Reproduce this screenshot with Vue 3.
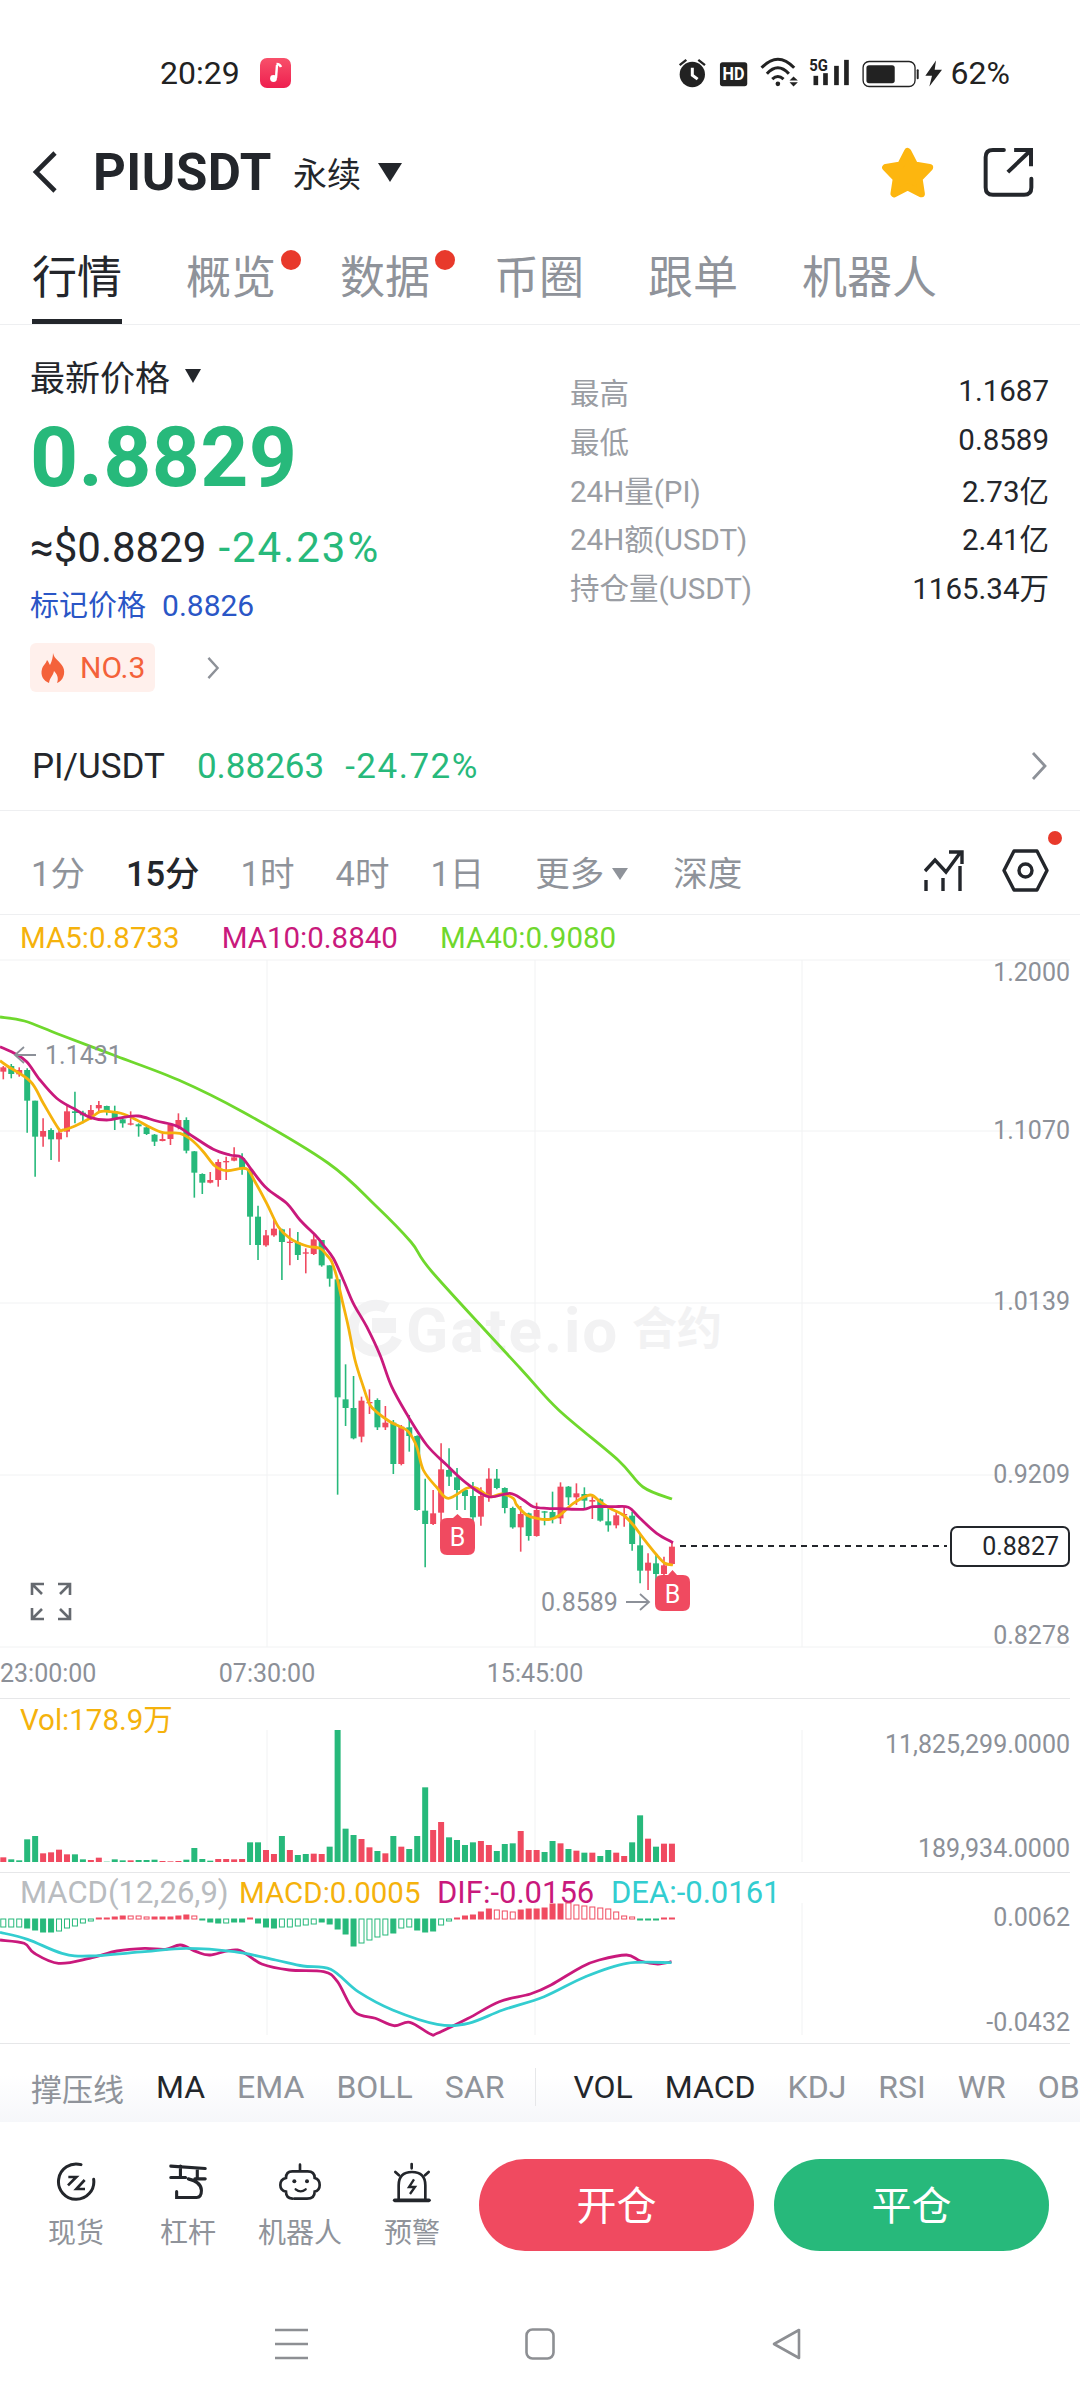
<template>
  <div class="page">
    <!-- status bar -->
    <div class="status">
      <span class="clock">20:29</span>
      <svg class="music" viewBox="0 0 31 30">
        <defs>
          <linearGradient id="mus" x1="0" y1="0" x2="0" y2="1">
            <stop offset="0" stop-color="#f8506a" />
            <stop offset="1" stop-color="#ee1f4f" />
          </linearGradient>
        </defs>
        <rect width="31" height="30" rx="7" fill="url(#mus)" />
        <path d="M17 7 L16 20" stroke="#fff" stroke-width="2.4" fill="none" />
        <path d="M16.5 6 Q20 6 21 9" stroke="#fff" stroke-width="2.4" fill="none" />
        <circle cx="13.5" cy="20.5" r="3.4" fill="#fff" />
      </svg>
      <svg class="sys" viewBox="120 48 790 95">
        <circle cx="160" cy="100" r="38" fill="#222" />
        <path d="M122 72 L142 56 M198 72 L178 56" stroke="#222" stroke-width="7" />
        <path d="M160 80 V102 L176 114" stroke="#fff" stroke-width="9" fill="none" />
        <rect x="243" y="63" width="82" height="72" rx="8" fill="#222" />
        <text x="284" y="118" class="hd" textLength="66" lengthAdjust="spacingAndGlyphs">HD</text>
        <path d="M368 80 Q417 28 466 80 M384 98 Q417 62 450 98 M400 114 Q417 98 434 114" stroke="#222" stroke-width="9" fill="none" />
        <circle cx="417" cy="128" r="7" fill="#222" />
        <path d="M464 106 L452 118 H477 Z M464 136 L452 123 H477 Z" fill="#222" />
        <text x="511" y="90" class="five" textLength="56" lengthAdjust="spacingAndGlyphs">5G</text>
        <rect x="524" y="104" width="14" height="28" fill="#222" />
        <rect x="553" y="96" width="14" height="36" fill="#222" />
        <rect x="586" y="74" width="14" height="58" fill="#222" />
        <rect x="616" y="56" width="14" height="76" fill="#222" />
        <rect x="673" y="61" width="156" height="75" rx="18" fill="none" stroke="#222" stroke-width="4" />
        <rect x="683" y="72" width="85" height="54" rx="8" fill="#222" />
        <rect x="834" y="84" width="6" height="30" rx="3" fill="#222" />
        <path d="M892 58 L860 104 H880 L872 136 L910 86 H888 Z" fill="#222" />
      </svg>
      <span class="pct">62%</span>
    </div>

    <!-- title -->
    <div class="header">
      <svg class="back" viewBox="0 0 26 42">
        <path d="M23 2 L4 21 L23 40" fill="none" stroke="#23262b" stroke-width="4.600" />
      </svg>
      <span class="symbol">PIUSDT</span>
      <span class="perp">永续</span>
      <i class="caret dark"></i>
      <svg class="star" viewBox="725 308 168 160">
        <polygon points="808,325 829,366 874,373 842,406 849,452 808,431 767,452 774,406 742,373 787,366" fill="#fdb60f" stroke="#fdb60f" stroke-width="22" stroke-linejoin="round" />
      </svg>
      <svg class="share" viewBox="1032 316 154 154">
        <path d="M1095 325 H1062 Q1040 325 1040 347 V438 Q1040 460 1062 460 H1156 Q1178 460 1178 438 V412" fill="none" stroke="#23262b" stroke-width="12" stroke-linecap="round" />
        <path d="M1107 392 L1174 328 M1126 325 H1177 V374" fill="none" stroke="#23262b" stroke-width="12" />
      </svg>
    </div>

    <div class="tabs">
      <div v-for="t in tabs" :key="t.name" class="tab" :class="{ on: t.on }">
        {{ t.name }}
        <i v-if="t.dot" class="dot"></i>
      </div>
    </div>

    <!-- price info -->
    <div class="info">
      <div class="left">
        <div class="latest">最新价格<i class="caret small"></i></div>
        <div class="price">0.8829</div>
        <div class="approx">≈$0.8829<span class="chg">-24.23%</span></div>
        <div class="mark">标记价格<span>0.8826</span></div>
        <div class="rank-row">
          <div class="rank">
            <svg class="fire" viewBox="0 0 26 30">
              <path d="M13 0 C14 6 20 8 23 14 C26 20 23 28 17 30 C19 25 17 21 14 18 C13 23 10 24 9 30 C4 28 0 23 2 16 C3 12 6 11 7 7 C9 9 9 11 10 12 C12 8 13 4 13 0Z" fill="#f4623a" />
            </svg>
            NO.3
          </div>
          <svg class="chev small" viewBox="0 0 14 24">
            <path d="M2 1 L12 12 L2 23" fill="none" stroke="#8d9198" stroke-width="2.6" />
          </svg>
        </div>
      </div>
      <div class="stats">
        <div v-for="s in stats" :key="s[0]" class="stat">
          <span class="k">{{ s[0] }}</span>
          <span class="v">{{ s[1] }}</span>
        </div>
      </div>
    </div>

    <div class="pair">
      <span class="pair-name">PI/USDT</span>
      <span class="pair-num">0.88263</span>
      <span class="pair-num chg2">-24.72%</span>
      <svg class="chev" viewBox="0 0 16 28">
        <path d="M2 1 L14 14 L2 27" fill="none" stroke="#8d9198" stroke-width="2.8" />
      </svg>
    </div>

    <!-- periods -->
    <div class="periods">
      <span class="per">1分</span>
      <span class="per on">15分</span>
      <span class="per">1时</span>
      <span class="per">4时</span>
      <span class="per last">1日</span>
      <span class="per more">更多<i class="caret grey"></i></span>
      <span class="per">深度</span>
      <svg class="kicon" viewBox="925 850 40 45">
        <path d="M927 882 V893 M944 880 V893 M961 868 V893" stroke="#23262b" stroke-width="3.4" />
        <path d="M926 873 L936 862 L947 874 L961 855 M950 854 H963 V866" fill="none" stroke="#23262b" stroke-width="3.4" />
      </svg>
      <div class="hexwrap">
        <svg class="hex" viewBox="1003 851 47 43">
          <polygon points="1015,853 1038,853 1048,872.5 1038,892 1015,892 1005,872.5" fill="none" stroke="#23262b" stroke-width="3.4" stroke-linejoin="round" />
          <circle cx="1026.5" cy="872.5" r="6.5" fill="none" stroke="#23262b" stroke-width="3.4" />
        </svg>
        <i class="hexdot"></i>
      </div>
    </div>

    <div class="ma-row">
      <span class="ma5">MA5:0.8733</span>
      <span class="ma10">MA10:0.8840</span>
      <span class="ma40">MA40:0.9080</span>
    </div>

    <!-- main chart, coordinates are page pixels -->
    <svg class="panel" width="1080" height="738" viewBox="0 960 1080 738">
      <g class="grid">
        <line x1="0" y1="960" x2="1070" y2="960" />
        <line x1="0" y1="1131" x2="1070" y2="1131" />
        <line x1="0" y1="1303" x2="1070" y2="1303" />
        <line x1="0" y1="1475" x2="1070" y2="1475" />
        <line x1="0" y1="1647" x2="1070" y2="1647" />
        <line x1="267" y1="960" x2="267" y2="1647" />
        <line x1="535" y1="960" x2="535" y2="1647" />
        <line x1="802" y1="960" x2="802" y2="1647" />
      </g>

      <g class="wm">
        <path d="M387 1308 A23 23 0 1 0 397 1338" fill="none" stroke="#f2f2f3" stroke-width="11" />
        <rect x="372" y="1318" width="24" height="15" fill="#f2f2f3" />
        <text x="406" y="1352" class="wm-en">Gate.io</text>
        <text x="632" y="1345" class="wm-cn">合约</text>
      </g>

      <text v-for="l in yLabels" :key="l[0]" x="1070" :y="l[1]" class="axis end">{{ l[0] }}</text>

      <g v-for="(c, i) in candles" :key="i" :fill="c.color" :stroke="c.color">
        <line :x1="c.x" :x2="c.x" :y1="c.h" :y2="c.l" stroke-width="1.6" />
        <rect :x="c.x - 3" :y="c.t" width="6" :height="c.b - c.t" stroke="none" />
      </g>

      <path :d="ma40" class="curve" stroke="#6fd82d" />
      <path :d="ma5" class="curve" stroke="#f5b20c" />
      <path :d="ma10" class="curve" stroke="#c9197c" />

      <path d="M16 1055 H36 M24 1047 L15 1055 L24 1063" fill="none" stroke="#8c9098" stroke-width="1.8" />
      <text x="45" y="1064" class="axis">1.1431</text>
      <text x="541" y="1611" class="axis">0.8589</text>
      <path d="M626 1602 H648 M640 1594 L649 1602 L640 1610" fill="none" stroke="#8c9098" stroke-width="1.8" />

      <g class="mark-b">
        <path d="M440 1525 Q440 1518 447 1518 H453 L457.500 1514 L462 1518 H468 Q475 1518 475 1525 V1548 Q475 1555 468 1555 H447 Q440 1555 440 1548 Z" fill="#f04a60" />
        <text x="457.500" y="1546" class="b">B</text>
        <path d="M655 1582 Q655 1575 662 1575 H668 L672.500 1570 L677 1575 H683 Q690 1575 690 1582 V1604 Q690 1611 683 1611 H662 Q655 1611 655 1604 Z" fill="#f04a60" />
        <text x="672.500" y="1603" class="b">B</text>
      </g>

      <line x1="680" y1="1546" x2="947" y2="1546" stroke="#23262b" stroke-width="2" stroke-dasharray="6 5" />
      <rect x="951" y="1527" width="118" height="39" rx="6" fill="#fff" stroke="#23262b" stroke-width="2" />
      <text x="1059" y="1555" class="axis end dark">0.8827</text>

      <!-- expand -->
      <path d="M32 1595 V1584 H44 M58 1584 H70 V1595 M70 1608 V1619 H58 M44 1619 H32 V1608 M33 1585 L42 1594 M69 1585 L60 1594 M69 1618 L60 1609 M33 1618 L42 1609" fill="none" stroke="#666a70" stroke-width="2.6" />

      <text x="0" y="1682" class="axis">23:00:00</text>
      <text x="267" y="1682" class="axis mid">07:30:00</text>
      <text x="535" y="1682" class="axis mid">15:45:00</text>
    </svg>

    <!-- volume -->
    <svg class="panel" width="1080" height="174" viewBox="0 1698 1080 174">
      <line x1="0" y1="1698.500" x2="1070" y2="1698.500" stroke="#e6e7e9" />
      <g class="grid">
        <line x1="267" y1="1730" x2="267" y2="1862" />
        <line x1="535" y1="1730" x2="535" y2="1862" />
        <line x1="802" y1="1730" x2="802" y2="1862" />
      </g>
      <text x="20" y="1730" class="lbl" fill="#f5b20c">Vol:178.9万</text>
      <text x="1070" y="1753" class="axis end">11,825,299.0000</text>
      <text x="1070" y="1857" class="axis end">189,934.0000</text>
      <rect v-for="(b, i) in vols" :key="i" :x="b.x - 3" :y="b.y" width="6" :height="1862 - b.y" :fill="b.color" />
    </svg>

    <!-- macd -->
    <svg class="panel" width="1080" height="172" viewBox="0 1872 1080 172">
      <line x1="0" y1="1872.500" x2="1070" y2="1872.500" stroke="#e6e7e9" />
      <line x1="0" y1="2043.500" x2="1070" y2="2043.500" stroke="#e6e7e9" />
      <g class="grid">
        <line x1="267" y1="1903" x2="267" y2="2035" />
        <line x1="535" y1="1903" x2="535" y2="2035" />
        <line x1="802" y1="1903" x2="802" y2="2035" />
      </g>
      <text x="20" y="1903" class="lbl wide" fill="#b9bcc0">MACD(12,26,9)</text>
      <text x="239" y="1903" class="lbl" fill="#f5b20c">MACD:0.0005</text>
      <text x="437" y="1903" class="lbl wide" fill="#c9197c">DIF:-0.0156</text>
      <text x="611" y="1903" class="lbl wide" fill="#33cdd0">DEA:-0.0161</text>
      <text x="1070" y="1926" class="axis end">0.0062</text>
      <text x="1070" y="2031" class="axis end">-0.0432</text>
      <rect v-for="(b, i) in hist" :key="i" :x="b.x" :y="b.y" width="5" :height="b.h"
        :fill="b.hollow ? '#fff' : b.color" :stroke="b.color" stroke-width="1" />
      <path :d="dif" class="curve" stroke="#c9197c" />
      <path :d="dea" class="curve" stroke="#33cdd0" />
    </svg>

    <!-- indicators -->
    <div class="inds">
      <span v-for="n in inds" :key="n.t" class="ind" :class="{ on: n.on, sep: n.sep, cjk: n.cjk }">{{ n.t }}</span>
    </div>

    <!-- actions -->
    <div class="actions">
      <div class="tool">
        <svg viewBox="165 118 126 126">
          <path d="M243 126 A53 53 0 1 0 281 170" fill="none" stroke="#23262b" stroke-width="9" stroke-linecap="round" />
          <path d="M205 163 H229 L204 188 M254 172 L229 199 H255" fill="none" stroke="#23262b" stroke-width="8" />
        </svg>
        <span>现货</span>
      </div>
      <div class="tool">
        <svg viewBox="505 122 120 122">
          <path d="M515 134 L615 141 M515 167 H558 M585 171 H615 M543 134 V167 M592 141 V171 M566 171 Q604 180 604 205 Q604 225 590 225 H532 V208" fill="none" stroke="#23262b" stroke-width="9" stroke-linecap="round" />
        </svg>
        <span>杠杆</span>
      </div>
      <div class="tool">
        <svg viewBox="838 122 126 122">
          <path d="M901 128 V146 M878 148 H924 Q945 148 945 168 Q960 172 960 189 Q960 206 945 209 Q945 230 922 230 H884 M878 230 Q859 228 859 209 Q842 206 842 189 Q842 172 859 168 Q859 148 878 148" fill="none" stroke="#23262b" stroke-width="8" stroke-linecap="round" />
          <circle cx="884" cy="178" r="6" fill="#23262b" />
          <circle cx="922" cy="178" r="6" fill="#23262b" />
          <path d="M888 202 Q903 214 918 202" fill="none" stroke="#23262b" stroke-width="7" stroke-linecap="round" />
        </svg>
        <span>机器人</span>
      </div>
      <div class="tool">
        <svg viewBox="1176 118 124 126">
          <path d="M1186 233 H1289" fill="none" stroke="#23262b" stroke-width="11" stroke-linecap="round" />
          <path d="M1198 233 V188 Q1198 148 1238 148 Q1278 148 1278 188 V233" fill="none" stroke="#23262b" stroke-width="8" />
          <path d="M1244 170 L1229 193 H1247 L1232 214" fill="none" stroke="#23262b" stroke-width="7" />
          <path d="M1237 124 V137 M1188 148 L1199 158 M1288 148 L1277 158" fill="none" stroke="#23262b" stroke-width="8" stroke-linecap="round" />
        </svg>
        <span>预警</span>
      </div>
      <div class="btn open">开仓</div>
      <div class="btn close">平仓</div>
    </div>

    <!-- nav -->
    <div class="nav">
      <svg width="33" height="32" viewBox="0 0 33 32">
        <path d="M0 2 H33 M0 16 H33 M0 30 H33" stroke="#8d8f93" stroke-width="2.6" />
      </svg>
      <svg width="30" height="32" viewBox="0 0 30 32">
        <rect x="1.500" y="1.500" width="27" height="29" rx="6" fill="none" stroke="#8d8f93" stroke-width="2.6" />
      </svg>
      <svg width="29" height="32" viewBox="0 0 29 32">
        <path d="M27 2 V30 L2 16 Z" fill="none" stroke="#8d8f93" stroke-width="2.6" stroke-linejoin="round" />
      </svg>
    </div>
  </div>
</template>

<script setup>
const G = '#27b97b'
const R = '#f04a60'

const tabs = [
  { name: '行情', on: true },
  { name: '概览', dot: true },
  { name: '数据', dot: true },
  { name: '币圈' },
  { name: '跟单' },
  { name: '机器人' },
]

const stats = [
  ['最高', '1.1687'],
  ['最低', '0.8589'],
  ['24H量(PI)', '2.73亿'],
  ['24H额(USDT)', '2.41亿'],
  ['持仓量(USDT)', '1165.34万'],
]

const inds = [
  { t: '撑压线', cjk: true },
  { t: 'MA', on: true },
  { t: 'EMA' },
  { t: 'BOLL' },
  { t: 'SAR', sep: true },
  { t: 'VOL', on: true },
  { t: 'MACD', on: true },
  { t: 'KDJ' },
  { t: 'RSI' },
  { t: 'WR' },
  { t: 'OB' },
]

const yLabels = [
  ['1.2000', 981],
  ['1.1070', 1139],
  ['1.0139', 1310],
  ['0.9209', 1483],
  ['0.8278', 1644],
]

// candle rows: colour, high, top, bottom, low. numbers are read off crops, 3x with y offset
const rowsA = [
  'r 78 82 95 118', 'g 72 78 102 115', 'r 82 90 103 110', 'g 85 90 182 278', 'g 182 182 290 410',
  'r 235 273 290 320', 'g 265 270 298 360', 'r 270 278 298 365', 'r 195 214 275 292', 'g 155 214 219 250',
  'g 212 218 226 250', 'r 195 210 230 240', 'r 183 195 205 215', 'g 197 198 214 226', 'g 197 214 238 270',
  'g 230 238 250 263', 'r 214 250 254 256', 'g 250 253 259 290', 'g 256 262 282 285', 'g 282 284 305 318',
  'r 278 297 303 304', 'r 250 254 297 315', 'r 220 240 262 268', 'g 232 240 332 340', 'g 333 334 398 473',
  'g 400 402 428 462', 'r 396 420 428 430', 'r 358 366 420 440', 'r 350 363 367 420', 'r 322 352 362 364',
  'g 340 354 386 404', 'g 388 388 530 615', 'g 497 530 615 660', 'r 570 586 616 620', 'r 538 566 586 590',
  'g 566 568 606 720', 'r 565 605 609 676', 'g 576 608 645 660', 'r 625 637 641 700', 'r 585 598 642 645',
  'g 600 600 676 680',
]
const rowsB = [
  'g 76 76 116 140', 'g 118 118 472 764', 'g 373 478 504 558', 'g 408 504 595 598', 'r 470 482 590 607',
  'r 448 486 490 522', 'g 475 480 562 570', 'r 498 548 562 570', 'g 540 548 672 702', 'r 555 560 672 676',
  'g 525 562 588 635', 'g 586 588 810 812', 'g 716 812 852 982', 'r 750 820 852 855', 'r 610 688 818 860',
  'g 625 690 710 738', 'g 684 712 750 810', 'g 745 750 768 810', 'g 726 768 832 850', 'r 742 768 830 857',
  'r 685 716 770 785', 'g 687 716 744 748', 'g 742 744 804 820', 'g 800 804 862 866',
]
const rowsC = [
  'r 168 192 232 305', 'g 188 190 258 272', 'r 158 180 258 260', 'g 183 184 188 226', 'g 125 186 205 220',
  'r 97 110 205 222', 'g 108 110 142 165', 'r 100 130 142 165', 'g 112 132 152 175', 'r 140 150 155 207',
  'g 145 148 212 215', 'g 175 214 226 245', 'r 185 196 226 235', 'r 170 192 196 230', 'g 185 197 282 302',
  'g 250 286 362 400', 'r 310 338 362 420', 'g 310 340 372 395', 'r 320 346 372 380', 'r 275 290 342 345',
]

const stepX = (i) => 3.3 + 7.96 * i

function readRows(rows, y0) {
  return rows.map((s) => {
    const [c, h, t, b, l] = s.split(' ')
    return { c, h: y0 + h / 3, t: y0 + t / 3, b: y0 + Math.max(b - t, 4) / 3 + t / 3, l: y0 + l / 3 }
  })
}

const candles = [...readRows(rowsA, 1040), ...readRows(rowsB, 1240), ...readRows(rowsC, 1450)].map((c, i) => ({
  ...c,
  x: stepX(i),
  color: c.c === 'g' ? G : R,
}))

// volume tops, crop coords (y = 1680 + v / 3)
const volRaw = [
  'r532', 'g538', 'g541', 'g478', 'g468', 'r520', 'r517', 'r509', 'r523', 'g523', 'g538', 'r540', 'r533', 'g545',
  'g538', 'g541', 'r541', 'g540', 'g540', 'g539', 'r543', 'r544', 'r543', 'g539', 'g504', 'g537', 'g542', 'r537',
  'r537', 'r538', 'r537', 'g487', 'g487', 'r510', 'r522', 'g468', 'r510', 'g525', 'g522', 'r521', 'r522', 'g500',
  'g150', 'g446', 'g465', 'r477', 'r502', 'g513', 'r520', 'g468', 'r500', 'g507', 'g468', 'g322', 'r450', 'r426',
  'g472', 'g480', 'g495', 'g487', 'r483', 'r495', 'g513', 'g492', 'g490', 'r453', 'r510', 'r510', 'g516', 'g483',
  'r490', 'g507', 'r512', 'g518', 'r518', 'g528', 'g510', 'r518', 'r528', 'g487', 'g406', 'r476', 'g500', 'r491', 'r491',
]
const vols = volRaw.map((s, i) => ({
  x: stepX(i),
  y: 1680 + Number(s.slice(1)) / 3,
  color: s[0] === 'g' ? G : R,
}))

// macd histogram in page px, + up. h marks hollow bars
const histRaw = [
  '-8h', '-8h', '-8h', '-9', '-11', '-13', '-13', '-12h', '-9h', '-7h', '-4h', '-2h', '1', '1', '2', '3', '3h', '3h', '2h', '2', '2', '2', '3', '4', '3h',
  '-1', '-3', '-4', '-4h', '-3', '-3', '1h', '-4', '-8', '-9', '-8h', '-8h', '-7h', '-6h', '-5h', '-3', '-5', '-10', '-15', '-27', '-24h', '-21h', '-18h', '-16h', '-14',
  '-9h', '-8h', '-11', '-13', '-12', '-6h', '-2h', '1', '3', '4', '7', '10', '9h', '8h', '7h', '9', '10', '10', '11', '15', '15', '16h', '14h', '13h', '12h', '11h', '10h', '7h', '3h', '2h', '-1', '-1', '-1', '1', '1',
]
const hist = histRaw.map((s, i) => {
  const v = parseFloat(s)
  return {
    x: stepX(i) - 2.5,
    y: v > 0 ? 1919 - v : 1919,
    h: Math.abs(v),
    hollow: s.endsWith('h'),
    color: v > 0 ? R : G,
  }
})

// catmull-rom through the points
function smooth(pts) {
  let d = `M${pts[0][0]} ${pts[0][1]}`
  for (let i = 0; i < pts.length - 1; i++) {
    const p0 = pts[i - 1] || pts[i]
    const p1 = pts[i]
    const p2 = pts[i + 1]
    const p3 = pts[i + 2] || p2
    const c1x = p1[0] + (p2[0] - p0[0]) / 6
    const c1y = p1[1] + (p2[1] - p0[1]) / 6
    const c2x = p2[0] - (p3[0] - p1[0]) / 6
    const c2y = p2[1] - (p3[1] - p1[1]) / 6
    d += `C${c1x.toFixed(1)} ${c1y.toFixed(1)} ${c2x.toFixed(1)} ${c2y.toFixed(1)} ${p2[0].toFixed(1)} ${p2[1].toFixed(1)}`
  }
  return d
}

const crop = (x0, y0, list) => list.map(([x, y]) => [x0 + x / 3, y0 + y / 3])

const ma5 = smooth([
  ...crop(0, 1040, [[0, 62], [22, 78], [92, 125], [130, 190], [175, 265], [190, 270], [225, 258], [270, 235], [300, 215], [330, 215], [370, 222], [410, 240], [450, 262], [490, 278], [540, 280], [575, 300], [610, 335], [645, 378], [680, 392], [725, 385], [745, 390], [765, 425], [800, 490], [835, 560], [870, 595], [920, 618], [960, 625]]),
  ...crop(320, 1240, [[20, 45], [35, 65], [50, 110], [65, 175], [85, 260], [105, 360], [130, 440], [150, 495], [175, 520], [210, 545], [240, 560], [265, 575], [290, 620], [310, 690], [350, 742], [385, 775], [440, 745], [470, 745], [510, 770], [545, 762], [580, 775]]),
  ...crop(500, 1450, [[50, 165], [80, 195], [110, 205], [150, 208], [180, 195], [220, 160], [270, 135], [300, 155], [330, 175], [370, 195], [400, 225], [430, 265], [470, 315], [495, 340], [519, 345]]),
])

const ma10 = smooth([
  ...crop(0, 1040, [[0, 20], [40, 38], [80, 65], [120, 120], [170, 175], [220, 205], [270, 232], [320, 240], [370, 232], [415, 228], [470, 243], [530, 258], [580, 290], [640, 328], [690, 345], [725, 352], [755, 390], [800, 445], [860, 490], [900, 540], [950, 590]]),
  ...crop(320, 1240, [[10, 15], [40, 55], [70, 120], [100, 190], [140, 260], [180, 345], [215, 440], [265, 530], [320, 615], [380, 675], [440, 730], [505, 770]]),
  ...crop(500, 1450, [[30, 130], [70, 150], [100, 170], [140, 175], [180, 176], [250, 178], [280, 170], [340, 170], [385, 172], [420, 205], [470, 250], [519, 278]]),
])

const ma40 = smooth([
  [0, 1017], [24.5, 1021], [58, 1034], [116, 1056], [178.6, 1080], [243, 1112], [328, 1163], [375, 1205], [411, 1242], [433, 1273],
  [520, 1368], [558.7, 1410], [618, 1460], [643, 1487], [672, 1499],
])

const macdPts = (list) => list.map(([x, y]) => [x / 1.452, 1680 + y / 3])

const dif = smooth(macdPts([[0, 780], [35, 790], [50, 820], [85, 850], [130, 835], [170, 813], [210, 805], [240, 808], [262, 795], [285, 815], [305, 825], [345, 810], [380, 852], [420, 870], [470, 875], [490, 905], [515, 995], [545, 1015], [572, 1037], [595, 1027], [625, 1062], [635, 1060], [680, 1015], [725, 965], [770, 942], [800, 915], [845, 860], [870, 840], [910, 825], [930, 843], [955, 852], [975, 845]]))

const dea = smooth(macdPts([[0, 757], [40, 778], [90, 820], [130, 828], [210, 815], [270, 805], [340, 815], [400, 840], [440, 858], [480, 868], [520, 935], [570, 990], [635, 1033], [680, 1030], [730, 990], [790, 950], [850, 890], [910, 850], [975, 848]]))
</script>

<style>
html,
body {
  margin: 0;
  background: #fff;
}
</style>

<style scoped>
.page {
  width: 1080px;
  height: 2400px;
  overflow: hidden;
  display: flex;
  flex-direction: column;
  background: #fff;
  color: #23262b;
  font-family: Roboto, "Noto Sans CJK SC", sans-serif;
}

.status {
  box-sizing: border-box;
  height: 110px;
  padding: 36px 70px 0 160px;
  display: flex;
  align-items: center;
  color: #222;
}
.clock {
  font-size: 32px;
  width: 100px;
}
.music {
  width: 31px;
  height: 30px;
}
.sys {
  width: 263px;
  height: 32px;
  margin-left: auto;
  overflow: visible;
}
.hd {
  font-size: 54px;
  font-weight: 700;
  fill: #fff;
  text-anchor: middle;
}
.five {
  font-size: 52px;
  font-weight: 700;
  fill: #222;
}
.pct {
  font-size: 32px;
  margin-left: 9px;
}

.header {
  height: 124px;
  padding: 0 46px 0 32px;
  display: flex;
  align-items: center;
}
.back {
  width: 26px;
  height: 42px;
}
.symbol {
  font-size: 51px;
  font-weight: 700;
  letter-spacing: 0.5px;
  margin-left: 35px;
}
.perp {
  font-size: 34px;
  margin-left: 21px;
}
.star {
  width: 56px;
  height: 53px;
  margin-left: auto;
}
.share {
  width: 51px;
  height: 51px;
  margin-left: 47px;
}
.caret {
  display: inline-block;
  width: 0;
  height: 0;
  border-style: solid;
  border-color: #23262b transparent transparent;
}
.caret.dark {
  border-width: 19px 12px 0;
  margin-left: 17px;
}
.caret.small {
  border-width: 14px 8px 0;
  margin-left: 15px;
  vertical-align: 8px;
}
.caret.grey {
  border-width: 12px 8px 0;
  border-top-color: #8f939a;
  margin-left: 8px;
  vertical-align: 6px;
}

.tabs {
  height: 91px;
  box-sizing: border-box;
  border-bottom: 1px solid #eeeff1;
  padding-left: 32px;
  display: flex;
  gap: 64px;
}
.tab {
  position: relative;
  box-sizing: border-box;
  height: 90px;
  line-height: 89px;
  font-size: 45px;
  color: #8f939a;
  border-bottom: 5px solid transparent;
}
.tab.on {
  color: #23262b;
  border-bottom-color: #23262b;
}
.dot {
  position: absolute;
  top: 16px;
  right: -25px;
  width: 20px;
  height: 20px;
  border-radius: 50%;
  background: #e8392b;
}

.info {
  height: 397px;
  display: flex;
  padding-left: 30px;
}
.left {
  width: 540px;
  padding-top: 35px;
}
.latest {
  height: 40px;
  line-height: 40px;
  font-size: 35px;
}
.price {
  height: 116px;
  line-height: 116px;
  font-size: 84px;
  font-weight: 700;
  letter-spacing: 0.3px;
  color: #27b97b;
}
.approx {
  height: 60px;
  line-height: 64px;
  font-size: 42px;
  white-space: nowrap;
}
.chg {
  color: #27b97b;
  margin-left: 12px;
  letter-spacing: 2px;
}
.mark {
  height: 58px;
  line-height: 60px;
  font-size: 29px;
  color: #2a56c6;
}
.mark span {
  margin-left: 16px;
  font-size: 30px;
}
.rank-row {
  margin-top: 9px;
  display: flex;
  align-items: center;
}
.rank {
  box-sizing: border-box;
  width: 125px;
  height: 49px;
  background: #fff0ec;
  border-radius: 6px;
  padding-left: 10px;
  display: flex;
  align-items: center;
  gap: 14px;
  font-size: 30px;
  color: #f4623a;
}
.fire {
  width: 26px;
  height: 30px;
}
.chev {
  width: 16px;
  height: 28px;
  margin-left: auto;
}
.chev.small {
  width: 14px;
  height: 22px;
  margin-left: 51px;
}
.stats {
  width: 479px;
  padding-top: 42px;
}
.stat {
  height: 48.7px;
  display: flex;
  align-items: center;
  justify-content: space-between;
  font-size: 29.5px;
}
.k {
  color: #9a9da3;
}

.pair {
  box-sizing: border-box;
  height: 89px;
  border-bottom: 1px solid #eeeff1;
  padding: 0 33px 0 32px;
  display: flex;
  align-items: center;
  font-size: 35px;
}
.pair-num {
  color: #27b97b;
  margin-left: 32px;
  font-size: 35px;
}
.pair-num.chg2 {
  margin-left: 21px;
  letter-spacing: 1.5px;
}

.periods {
  box-sizing: border-box;
  height: 104px;
  padding: 16px 31px 0 31px;
  border-bottom: 1px solid #eeeff1;
  display: flex;
  align-items: center;
  font-size: 34.5px;
  color: #8f939a;
}
.per {
  margin-right: 41px;
}
.per.last {
  margin-right: 51px;
}
.per.on {
  color: #23262b;
  font-weight: 500;
}
.per.more {
  margin-right: 45px;
}
.kicon {
  width: 40px;
  height: 45px;
  margin-left: auto;
}
.hexwrap {
  position: relative;
  margin-left: 38px;
  height: 43px;
}
.hex {
  width: 47px;
  height: 43px;
}
.hexdot {
  position: absolute;
  top: -18px;
  right: -13px;
  width: 14px;
  height: 14px;
  border-radius: 50%;
  background: #e8392b;
}

.ma-row {
  height: 45px;
  padding-left: 20px;
  display: flex;
  align-items: center;
  gap: 42px;
  font-size: 29.5px;
}
.ma5 {
  color: #f5b20c;
}
.ma10 {
  color: #c9197c;
}
.ma40 {
  color: #6fd82d;
}

.panel {
  display: block;
  flex: none;
  overflow: visible;
}
.grid line {
  stroke: #f1f2f3;
  stroke-width: 1;
}
.axis {
  font-size: 25px;
  fill: #8c9098;
}
.axis.end {
  text-anchor: end;
}
.axis.mid {
  text-anchor: middle;
}
.axis.dark {
  fill: #23262b;
}
.lbl {
  font-size: 29.5px;
}
.lbl.wide {
  font-size: 31px;
}
.curve {
  fill: none;
  stroke-width: 2.8;
  stroke-linejoin: round;
}
.wm-en {
  font-size: 62px;
  font-weight: 700;
  letter-spacing: 2px;
  fill: #f2f2f3;
}
.wm-cn {
  font-size: 45px;
  font-weight: 700;
  fill: #f2f2f3;
}
.b {
  font-size: 25px;
  fill: #fff;
  text-anchor: middle;
}

.inds {
  box-sizing: border-box;
  height: 78px;
  padding: 8px 0 0 31px;
  display: flex;
  align-items: center;
  gap: 32px;
  overflow: hidden;
  white-space: nowrap;
  font-size: 32px;
  color: #8f939a;
  background: linear-gradient(#fff 40%, #f6f7fa);
}
.ind.cjk {
  font-size: 31px;
}
.ind.on {
  color: #23262b;
}
.ind.sep {
  padding-right: 31px;
  margin-right: 5px;
  border-right: 1px solid #e6e7e9;
}

.actions {
  box-sizing: border-box;
  height: 178px;
  padding: 37px 0 0 20px;
  display: flex;
  align-items: flex-start;
}
.tool {
  width: 112px;
  padding-top: 3px;
  display: flex;
  flex-direction: column;
  align-items: center;
  font-size: 28px;
  color: #8f939a;
}
.tool svg {
  width: 42px;
  height: 42px;
}
.tool span {
  line-height: 40px;
  margin-top: 10px;
}
.btn {
  width: 275px;
  height: 92px;
  line-height: 95px;
  border-radius: 46px;
  text-align: center;
  font-size: 40px;
  color: #fff;
}
.btn.open {
  margin-left: 11px;
  background: #f04a60;
}
.btn.close {
  margin-left: 20px;
  background: #27b97b;
}

.nav {
  box-sizing: border-box;
  height: 100px;
  padding: 0 0 12px 275px;
  display: flex;
  align-items: center;
  gap: 217px;
}
</style>
